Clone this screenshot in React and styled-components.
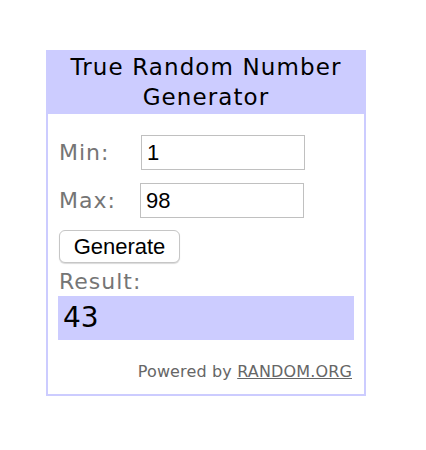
import styled, { createGlobalStyle } from "styled-components";

const GlobalStyle = createGlobalStyle`
  html, body {
    margin: 0;
    padding: 0;
    background: #ffffff;
  }
`;

const Page = styled.div`
  padding: 50px 0 0 46px;
`;

const Widget = styled.div`
  width: 320px;
  box-sizing: border-box;
  border: 2px solid #ccccff;
  background: #ffffff;
  font-family: "DejaVu Sans", Verdana, sans-serif;
`;

const Header = styled.div`
  background: #ccccff;
  color: #000000;
  text-align: center;
  font-size: 23px;
  letter-spacing: 1.1px;
  line-height: 30px;
  padding: 0 0 2px;
`;

const Body = styled.div`
  padding: 21px 10px 13px 10px;
`;

const Field = styled.div`
  display: grid;
  grid-template-columns: ${(p) => p.$labelWidth}px 164px;
  align-items: center;
  height: 35px;
  margin-bottom: ${(p) => p.$gap}px;
`;

const Label = styled.label`
  color: #757575;
  font-size: 22px;
  letter-spacing: 1px;
  padding-left: 1px;
`;

const Input = styled.input`
  box-sizing: border-box;
  width: 164px;
  height: 35px;
  border: 1px solid #c0c0c0;
  padding: 0 5px;
  font-family: "Liberation Sans", Arial, sans-serif;
  font-size: 22px;
  color: #000000;
  outline: none;
`;

const Button = styled.button`
  display: block;
  width: 121px;
  height: 33px;
  padding: 0;
  margin: 0 0 6px 1px;
  background: #ffffff;
  border: 1px solid #c6c6c6;
  border-radius: 6px;
  box-shadow: 0 1px 1px rgba(0, 0, 0, 0.15);
  font-family: "Liberation Sans", Arial, sans-serif;
  font-size: 22px;
  color: #000000;
`;

const ResultLabel = styled.div`
  color: #757575;
  font-size: 22px;
  letter-spacing: 1px;
  line-height: 25px;
  padding-left: 1px;
  margin-bottom: 2px;
`;

const ResultBox = styled.div`
  background: #ccccff;
  height: 44px;
  line-height: 44px;
  font-size: 28px;
  color: #000000;
  padding-left: 5px;
`;

const Powered = styled.div`
  margin-top: 22px;
  text-align: right;
  padding-right: 2px;
  font-size: 16px;
  letter-spacing: 0.15px;
  line-height: 19px;
  color: #666666;

  a {
    color: #666666;
    text-decoration: underline;
  }
`;

export default function App() {
  return (
    <>
      <GlobalStyle />
      <Page>
        <Widget>
          <Header>
            True Random Number
            <br />
            Generator
          </Header>
          <Body>
            <Field $labelWidth={83} $gap={13}>
              <Label>Min:</Label>
              <Input defaultValue="1" />
            </Field>
            <Field $labelWidth={82} $gap={12}>
              <Label>Max:</Label>
              <Input defaultValue="98" />
            </Field>
            <Button>Generate</Button>
            <ResultLabel>Result:</ResultLabel>
            <ResultBox>43</ResultBox>
            <Powered>
              Powered by <a href="#">RANDOM.ORG</a>
            </Powered>
          </Body>
        </Widget>
      </Page>
    </>
  );
}
